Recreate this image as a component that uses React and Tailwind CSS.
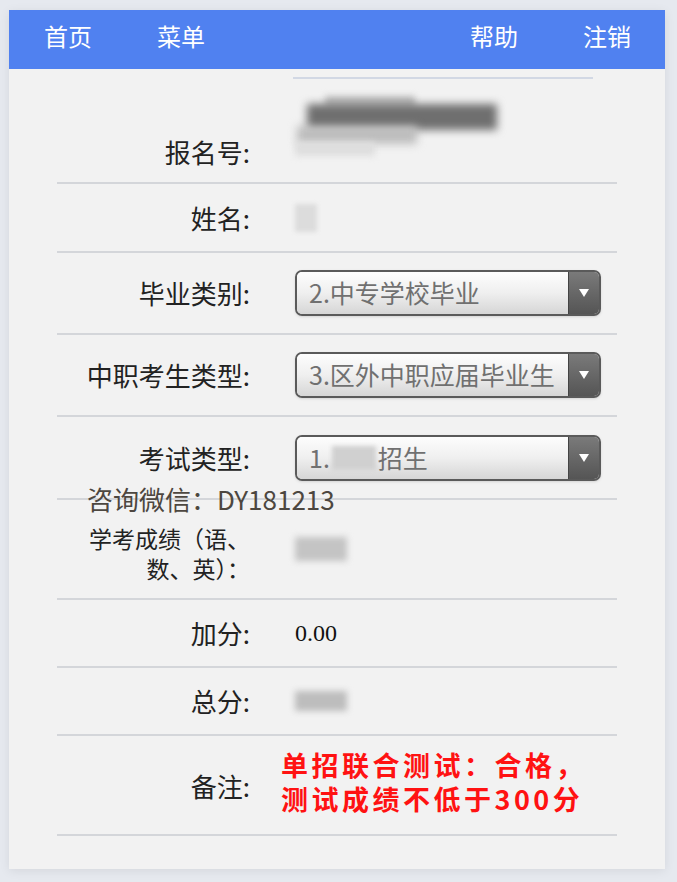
import React from 'react';

const font = { fontFamily: '"Noto Sans CJK SC", "Noto Sans", sans-serif' };

const Select = ({ children }) => (
  <div className="flex h-[46px] w-[306px] overflow-hidden rounded-[7px] border-2 border-[#5a5a5a] shadow-sm">
    <div className="flex flex-1 items-center bg-gradient-to-b from-[#fdfdfd] via-[#efefef] to-[#d6d6d6] pl-[12px] text-[25px] text-[#707070]">
      {children}
    </div>
    <div className="flex w-[31px] items-center justify-center border-l border-[#444] bg-gradient-to-b from-[#7a7a7a] to-[#555]">
      <svg width="10" height="8" viewBox="0 0 10 8">
        <path d="M0 0 L10 0 L5 8 Z" fill="#fff" />
      </svg>
    </div>
  </div>
);

const Row = ({ label, h, children, labelClass = 'text-[26px]' }) => (
  <div className={`flex items-center border-b-2 border-[#d4d6da] ${h}`}>
    <div className={`w-[193px] shrink-0 text-right leading-[30px] text-[#222] ${labelClass}`}>{label}</div>
    <div className="ml-[45px] flex-1">{children}</div>
  </div>
);

export default function App() {
  return (
    <div className="min-h-[882px] w-[677px] bg-[#e6e9ef] pt-[10px]" style={font}>
      <div className="relative ml-[9px] w-[656px] bg-[#f2f2f2] pb-[33px] shadow-[0_2px_10px_rgba(0,0,0,0.08)]">
        <div className="flex h-[59px] items-start bg-[#5081f0] pt-[8px] text-[24px] text-white">
          <span className="ml-[35px]">首页</span>
          <span className="ml-[65px]">菜单</span>
          <span className="ml-auto">帮助</span>
          <span className="ml-[65px] mr-[34px]">注销</span>
        </div>
        <div className="ml-[284px] mt-[8px] h-[2px] w-[300px] bg-[#d2d8e4]" />
        <div className="ml-[48px] w-[560px]">
          <Row label="报名号:" h="h-[105px]" labelClass="mt-[42px] text-[26px]">
            <div className="relative h-[90px] w-[220px]">
              <div className="absolute left-[30px] top-[10px] h-[12px] w-[90px] bg-[#bcbcbc] blur-[3px]" />
              <div className="absolute left-[12px] top-[18px] h-[26px] w-[190px] bg-[#6f6f6f] blur-[4px]" />
              <div className="absolute left-[2px] top-[40px] h-[18px] w-[120px] bg-[#bdbdbd] blur-[4px]" />
              <div className="absolute left-[0px] top-[56px] h-[14px] w-[80px] bg-[#dedede] blur-[3px]" />
            </div>
          </Row>
          <Row label="姓名:" h="h-[69px]">
            <div className="h-[28px] w-[22px] bg-[#dcdcdc] blur-[2px]" />
          </Row>
          <Row label="毕业类别:" h="h-[82px]">
            <Select>2.中专学校毕业</Select>
          </Row>
          <Row label="中职考生类型:" h="h-[82px]">
            <Select>3.区外中职应届毕业生</Select>
          </Row>
          <Row label="考试类型:" h="h-[83px]">
            <Select>
              1.<span className="mx-[2px] inline-block h-[24px] w-[44px] bg-[#d0d0d0] blur-[2px]" />招生
            </Select>
          </Row>
          <Row label={<>学考成绩（语、<br />数、英）：</>} h="h-[100px]" labelClass="mt-[8px] text-[23px]">
            <div className="h-[24px] w-[52px] bg-[#c4c4c4] blur-[3px]" />
          </Row>
          <Row label="加分:" h="h-[68px]">
            <span className="text-[24px] text-[#111]" style={{ fontFamily: '"Liberation Serif", serif' }}>0.00</span>
          </Row>
          <Row label="总分:" h="h-[68px]">
            <div className="h-[20px] w-[52px] bg-[#bdbdbd] blur-[3px]" />
          </Row>
          <div className="flex h-[100px] items-center border-b-2 border-[#d4d6da]">
            <div className="w-[193px] shrink-0 text-right text-[26px] text-[#222]">备注:</div>
            <div className="mb-[6px] ml-[31px] text-[27px] font-bold leading-[34px] tracking-[3.5px] text-[#ff1212]">
              单招联合测试：合格，<br />测试成绩不低于300分
            </div>
          </div>
        </div>
        <div className="absolute left-[78px] top-[472px] text-[26px] leading-[34px] text-[#4d4740]">咨询微信：DY181213</div>
      </div>
    </div>
  );
}
